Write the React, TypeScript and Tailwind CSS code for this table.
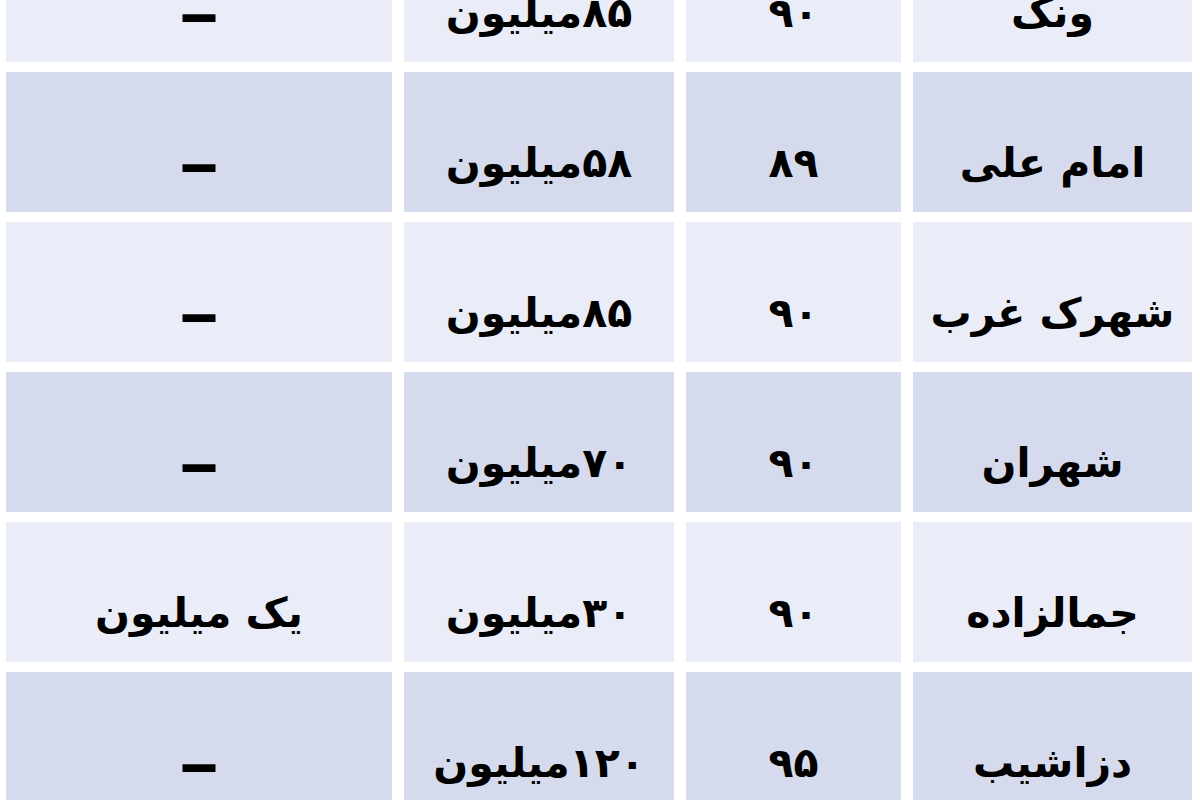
const rows = [
  { name: 'ونک', year: '۹۰', price: '۸۵میلیون', extra: '–' },
  { name: 'امام علی', year: '۸۹', price: '۵۸میلیون', extra: '–' },
  { name: 'شهرک غرب', year: '۹۰', price: '۸۵میلیون', extra: '–' },
  { name: 'شهران', year: '۹۰', price: '۷۰میلیون', extra: '–' },
  { name: 'جمالزاده', year: '۹۰', price: '۳۰میلیون', extra: 'یک میلیون' },
  { name: 'دزاشیب', year: '۹۵', price: '۱۲۰میلیون', extra: '–' },
];

export default function App() {
  return (
    <div className="w-[1200px] h-[800px] overflow-hidden bg-white">
      <div
        dir="rtl"
        className="-mt-[78px] grid grid-cols-[279px_215px_270px_386px] auto-rows-[140px] gap-x-[12px] gap-y-[10px] pr-[8px] pl-[6px] text-[41px] font-bold text-black"
        style={{ fontFamily: '"DejaVu Sans", sans-serif' }}
      >
        {rows.map((r, i) => {
          const bg = i % 2 === 0 ? 'bg-[#eaecf7]' : 'bg-[#d5daed]';
          return [r.name, r.year, r.price, r.extra].map((t, j) => (
            <div key={`${i}-${j}`} className={`${bg} flex items-center justify-center pt-[44px] whitespace-nowrap`}>
              {t === '–' ? (
                <span className="inline-block text-[60px] leading-none scale-x-[1.4]">–</span>
              ) : (
                t
              )}
            </div>
          ));
        })}
      </div>
    </div>
  );
}
